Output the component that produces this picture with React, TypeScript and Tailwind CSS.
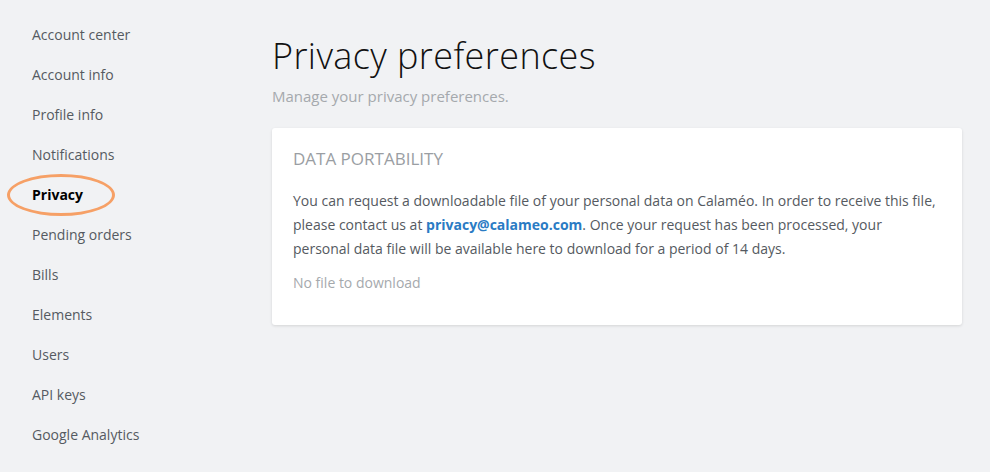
import React from "react";

const items = [
  "Account center",
  "Account info",
  "Profile info",
  "Notifications",
  "Privacy",
  "Pending orders",
  "Bills",
  "Elements",
  "Users",
  "API keys",
  "Google Analytics",
];

export default function App() {
  return (
    <div
      className="w-[990px] h-[472px] bg-[#f1f2f4] flex overflow-hidden"
      style={{ fontFamily: "'Open Sans', 'Noto Sans', sans-serif" }}
    >
      <nav className="w-[272px] shrink-0 pt-[14px] pl-[32px] flex flex-col">
        {items.map((it) => (
          <div key={it} className="h-[40px] flex items-center relative">
            {it === "Privacy" ? (
              <>
                <span className="text-[14px] font-bold text-black relative z-10">{it}</span>
                <span className="absolute left-[-25px] top-[0px] w-[108px] h-[42px] rounded-[50%] border-[3px] border-[#f6a066]" />
              </>
            ) : (
              <span className="text-[14px] text-[#555a61]">{it}</span>
            )}
          </div>
        ))}
      </nav>
      <main className="flex-1 pt-[34px] pr-[28px]">
        <h1 className="text-[36px] leading-[44px] text-[#111] font-light tracking-[0.4px]">Privacy preferences</h1>
        <p className="mt-[7px] text-[15px] text-[#a5a9ad]">Manage your privacy preferences.</p>
        <section className="mt-[20px] bg-white rounded-[3px] shadow-[0_1px_3px_rgba(0,0,0,0.12)] px-[21px] pt-[20px] pb-[30px]">
          <h2 className="text-[17px] text-[#9a9ea3] uppercase leading-[22px]">Data portability</h2>
          <p className="mt-[19px] text-[14px] leading-[24px] text-[#555a61]">
            You can request a downloadable file of your personal data on Calaméo. In order to receive this file,
            please contact us at <a className="font-bold text-[#2a7bc4]">privacy@calameo.com</a>. Once your request has been processed, your
            personal data file will be available here to download for a period of 14 days.
          </p>
          <p className="mt-[10px] text-[14px] leading-[24px] text-[#a5a9ad]">No file to download</p>
        </section>
      </main>
    </div>
  );
}
